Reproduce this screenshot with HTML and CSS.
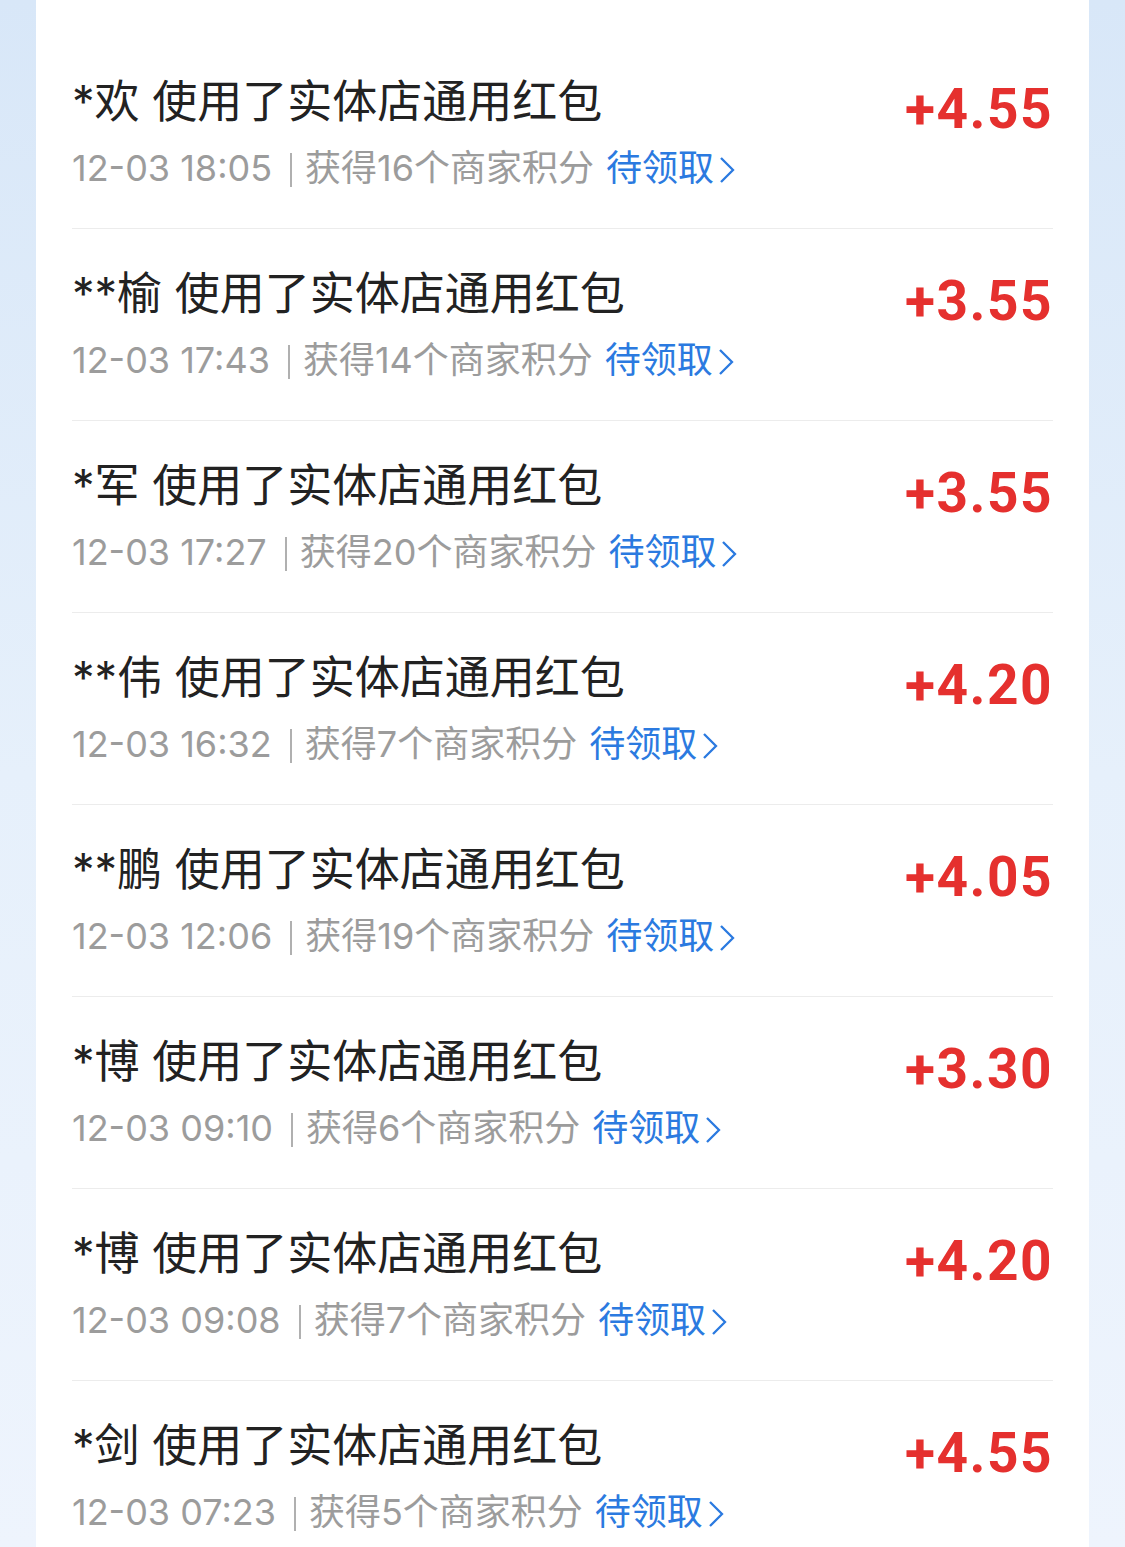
FILE: index.html
```html
<!DOCTYPE html>
<html lang="zh-CN">
<head>
	<meta charset="UTF-8">
	<title>红包使用记录</title>
	<link rel="stylesheet" href="styles.css">
</head>
<body>
<div class="card">
  <ul class="records">
    <li class="record">
      <div class="info">
        <p class="title">*欢 使用了实体店通用红包</p>
        <p class="meta">12-03 18:05<i class="bar"></i>获得16个商家积分<a class="claim" href="#">待领取<svg viewBox="0 0 16 30"><path d="M2 3l12 12L2 27"/></svg></a></p>
      </div>
      <span class="amount">+4.55</span>
    </li>
    <li class="record">
      <div class="info">
        <p class="title">**榆 使用了实体店通用红包</p>
        <p class="meta">12-03 17:43<i class="bar"></i>获得14个商家积分<a class="claim" href="#">待领取<svg viewBox="0 0 16 30"><path d="M2 3l12 12L2 27"/></svg></a></p>
      </div>
      <span class="amount">+3.55</span>
    </li>
    <li class="record">
      <div class="info">
        <p class="title">*军 使用了实体店通用红包</p>
        <p class="meta">12-03 17:27<i class="bar"></i>获得20个商家积分<a class="claim" href="#">待领取<svg viewBox="0 0 16 30"><path d="M2 3l12 12L2 27"/></svg></a></p>
      </div>
      <span class="amount">+3.55</span>
    </li>
    <li class="record">
      <div class="info">
        <p class="title">**伟 使用了实体店通用红包</p>
        <p class="meta">12-03 16:32<i class="bar"></i>获得7个商家积分<a class="claim" href="#">待领取<svg viewBox="0 0 16 30"><path d="M2 3l12 12L2 27"/></svg></a></p>
      </div>
      <span class="amount">+4.20</span>
    </li>
    <li class="record">
      <div class="info">
        <p class="title">**鹏 使用了实体店通用红包</p>
        <p class="meta">12-03 12:06<i class="bar"></i>获得19个商家积分<a class="claim" href="#">待领取<svg viewBox="0 0 16 30"><path d="M2 3l12 12L2 27"/></svg></a></p>
      </div>
      <span class="amount">+4.05</span>
    </li>
    <li class="record">
      <div class="info">
        <p class="title">*博 使用了实体店通用红包</p>
        <p class="meta">12-03 09:10<i class="bar"></i>获得6个商家积分<a class="claim" href="#">待领取<svg viewBox="0 0 16 30"><path d="M2 3l12 12L2 27"/></svg></a></p>
      </div>
      <span class="amount">+3.30</span>
    </li>
    <li class="record">
      <div class="info">
        <p class="title">*博 使用了实体店通用红包</p>
        <p class="meta">12-03 09:08<i class="bar"></i>获得7个商家积分<a class="claim" href="#">待领取<svg viewBox="0 0 16 30"><path d="M2 3l12 12L2 27"/></svg></a></p>
      </div>
      <span class="amount">+4.20</span>
    </li>
    <li class="record">
      <div class="info">
        <p class="title">*剑 使用了实体店通用红包</p>
        <p class="meta">12-03 07:23<i class="bar"></i>获得5个商家积分<a class="claim" href="#">待领取<svg viewBox="0 0 16 30"><path d="M2 3l12 12L2 27"/></svg></a></p>
      </div>
      <span class="amount">+4.55</span>
    </li>
  </ul>
</div>
</body>
</html>
```

FILE: styles.css
```css
html, body {
  height: 100%;
  margin: 0;
  overflow: hidden;
}

body {
  background: linear-gradient(180deg, #d8e7f8 0%, #e6f0fb 50%, #eef4fd 100%);
  font-family: Inter, "Noto Sans CJK SC", sans-serif;
}

/* 白色卡片 */
.card {
  min-height: 100%;
  margin: 0 36px;
  padding: 37px 36px 0;
  background: #fff;
  box-sizing: border-box;
}

.records {
  margin: 0;
  padding: 0;
  list-style-type: none;
}

/* 每一条记录 */
.record {
  display: flex;
  justify-content: space-between;
  align-items: flex-start;
  height: 192px;
  border-bottom: 1px solid #ececec;
  box-sizing: border-box;
}

.info p {
  margin: 0;
  white-space: nowrap;
}

.title {
  margin-top: 35px !important;
  font-size: 45px;
  line-height: 60px;
  color: #222;
}

.meta {
  margin-top: 11px !important;
  font-size: 36px;
  line-height: 50px;
  color: #9c9c9c;
}

/* 时间和积分中间的竖线 */
.bar {
  display: inline-block;
  width: 2px;
  height: 34px;
  margin: 0 13px 0 18px;
  vertical-align: -6px;
  background: #b0b0b0;
}

/* 待领取 */
.claim {
  margin-left: 12px;
  color: #2b7ae0;
  text-decoration: none;
}

.claim svg {
  width: 16px;
  height: 30px;
  margin-left: 5px;
  vertical-align: -4px;
  fill: none;
  stroke: #2b7ae0;
  stroke-width: 2.3;
}

/* 红包金额 */
.amount {
  margin-top: 40px;
  font-family: Roboto, "Liberation Sans", sans-serif;
  font-weight: 700;
  font-size: 55px;
  line-height: 64px;
  letter-spacing: 1.5px;
  color: #e5302e;
}
```
